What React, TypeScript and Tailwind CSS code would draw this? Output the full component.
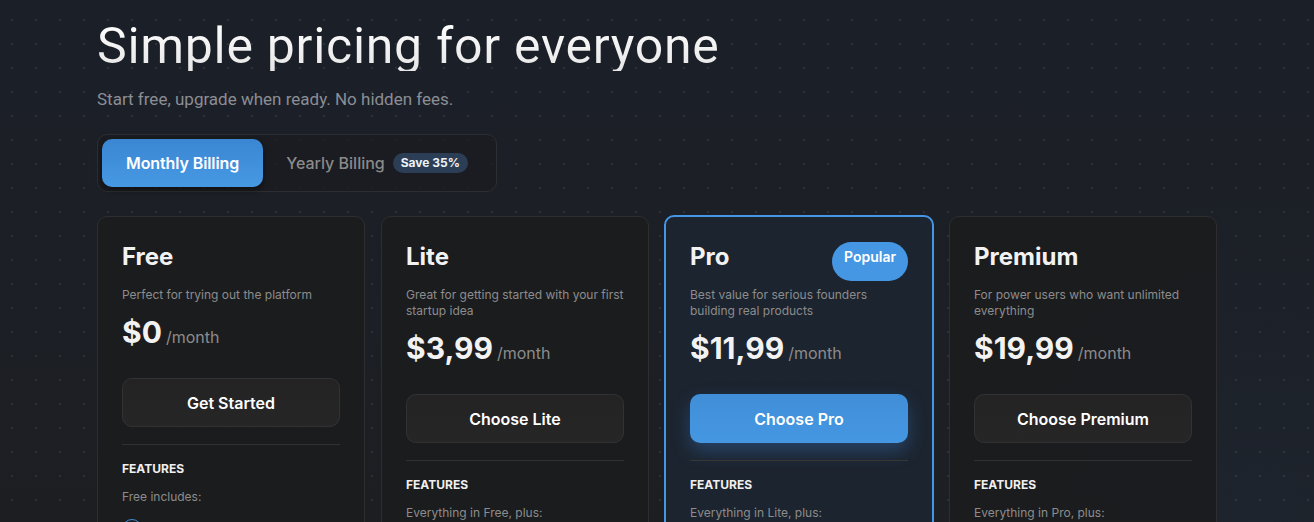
import React, { useState } from 'react';
import { Check } from 'lucide-react';

const plans = [
  {
    name: 'Free',
    desc: 'Perfect for trying out the platform',
    price: '$0',
    cta: 'Get Started',
    intro: 'Free includes:',
    features: ['1 startup idea', 'Basic AI validation', 'Community support'],
  },
  {
    name: 'Lite',
    desc: 'Great for getting started with your first startup idea',
    price: '$3,99',
    cta: 'Choose Lite',
    intro: 'Everything in Free, plus:',
    features: ['3 startup ideas', 'Market research reports', 'Email support'],
  },
  {
    name: 'Pro',
    desc: 'Best value for serious founders building real products',
    price: '$11,99',
    cta: 'Choose Pro',
    intro: 'Everything in Lite, plus:',
    features: ['Unlimited ideas', 'Competitor analysis', 'Priority support'],
    popular: true,
  },
  {
    name: 'Premium',
    desc: 'For power users who want unlimited everything',
    price: '$19,99',
    cta: 'Choose Premium',
    intro: 'Everything in Pro, plus:',
    features: ['Team workspace', 'Custom integrations', 'Dedicated manager'],
  },
];

const App: React.FC = () => {
  const [yearly, setYearly] = useState(false);

  return (
    <div className="min-h-screen bg-[radial-gradient(circle_at_96%_78%,rgba(38,66,104,0.18),transparent_28%),linear-gradient(180deg,#1b1f28_0%,#1c1f25_45%,#1d1d1e_100%)] font-['Inter',sans-serif]">
      <div className="min-h-screen bg-[radial-gradient(circle,rgba(255,255,255,0.07)_1px,transparent_1.6px)] bg-[size:24px_24px] bg-[position:0_8px] pb-20">
        <div className="mx-auto max-w-[1120px] pt-[21px]">
          <h1 className="bg-gradient-to-b from-white to-[#e6e6e6] bg-clip-text font-['Roboto',sans-serif] text-[50px] leading-none font-normal tracking-[0.7px] text-transparent">
            Simple pricing for everyone
          </h1>
          <p className="mt-4 font-['Roboto',sans-serif] text-[17px] leading-6 text-[#8b8e95]">
            Start free, upgrade when ready. No hidden fees.
          </p>

          {/* billing toggle */}
          <div className="mt-[23px] inline-flex rounded-[10px] border border-[#2d2e31] bg-[#1a1b1f]/70 p-[4px]">
            <button
              onClick={() => setYearly(false)}
              className={`h-12 rounded-[10px] px-6 text-base font-semibold tracking-[-0.1px] ${!yearly ? 'bg-gradient-to-b from-[#3a86d2] to-[#4799e4] text-white shadow-[0_3px_6px_rgba(0,0,0,0.45)]' : 'text-[#8a8a8a]'}`}
            >
              Monthly Billing
            </button>
            <button
              onClick={() => setYearly(true)}
              className={`flex h-12 items-center gap-2 rounded-[10px] pr-6 pl-[23px] text-base font-medium ${yearly ? 'bg-[#4494e0] text-white' : 'text-[#8a8a8a]'}`}
            >
              Yearly Billing
              <span className="rounded-full bg-[#2b3e55] px-2 py-[2px] text-xs font-bold text-[#eef3f8]">Save 35%</span>
            </button>
          </div>

          {/* plans */}
          <div className="mt-6 grid grid-cols-4 gap-4">
            {plans.map((p) => (
              <div
                key={p.name}
                className={`relative flex flex-col rounded-[10px] p-6 ${p.popular ? '-m-px border-2 border-[#4596e4] bg-[#1c2530]/95' : 'border border-[#2e2e30] bg-[#1c1c1e]/90'}`}
              >
                {p.popular && (
                  <span className="absolute top-[25px] right-6 h-[39px] rounded-full bg-[#4597e3] px-3 pt-[5px] text-sm leading-5 font-semibold text-white">
                    Popular
                  </span>
                )}
                <h2 className="text-2xl leading-8 font-bold text-[#f2f2f2]">{p.name}</h2>
                <p className="mt-3.5 text-xs leading-4 text-[#8c8c8c]">{p.desc}</p>
                <div className="mt-[11px] flex items-baseline gap-1">
                  <span className="text-3xl font-bold text-[#f2f2f2]">{p.price}</span>
                  <span className="text-base text-[#8c8c8c]">/month</span>
                </div>
                <button
                  className={`mt-7 h-[49px] rounded-[10px] text-base font-semibold text-white ${p.popular ? 'bg-gradient-to-b from-[#418ed8] to-[#4597e2] shadow-[0_8px_18px_rgba(59,130,210,0.35)]' : 'border border-[#323234] bg-gradient-to-b from-[#232323] to-[#262626]'}`}
                >
                  {p.cta}
                </button>
                <div className={`mt-[17px] h-px ${p.popular ? 'bg-[#3a3633]' : 'bg-[#323234]'}`} />
                <h3 className="mt-4 text-xs leading-4 font-bold text-[#f0f0f0]">FEATURES</h3>
                <p className="mt-3 text-xs leading-4 text-[#8c8c8c]">{p.intro}</p>
                <ul className="mt-3.5 flex flex-col gap-3">
                  {p.features.map((f) => (
                    <li key={f} className="flex items-center gap-3 text-xs text-[#d0d0d0]">
                      <span className="flex h-5 w-5 items-center justify-center rounded-full border-[1.5px] border-[#3f8fdc]">
                        <Check size={11} strokeWidth={3} className="text-[#3f8fdc]" />
                      </span>
                      {f}
                    </li>
                  ))}
                </ul>
              </div>
            ))}
          </div>
        </div>
      </div>
    </div>
  );
};

export default App;
